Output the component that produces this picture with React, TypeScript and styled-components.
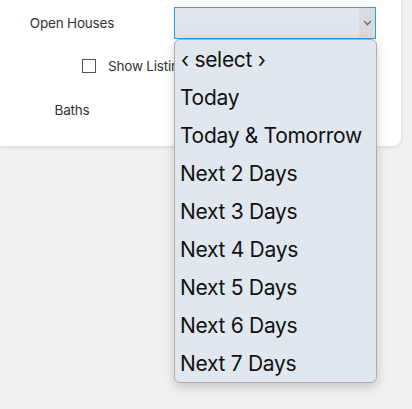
import styled, { createGlobalStyle } from "styled-components";

const GlobalStyle = createGlobalStyle`
  html, body {
    margin: 0;
    padding: 0;
    background: #f1f1f1;
    font-family: Inter, "Noto Sans", sans-serif;
  }
`;

const Page = styled.div`
  width: 412px;
  height: 409px;
  overflow: hidden;
`;

const Card = styled.div`
  width: 401px;
  height: 146px;
  background: #fff;
  border-bottom-right-radius: 8px;
  box-shadow: 0 1px 4px rgba(0, 0, 0, 0.12);
  display: grid;
  grid-template-columns: 144px 202px;
  column-gap: 30px;
  grid-template-rows: 32px 28px 34px;
  row-gap: 13px;
  padding-top: 7px;
  box-sizing: border-box;
`;

const Label = styled.div`
  font-size: 13.5px;
  color: #333;
  text-align: center;
  align-self: center;
  letter-spacing: -0.2px;
`;

const Field = styled.div`
  position: relative;
`;

const SelectBox = styled.div<{ $focused?: boolean }>`
  height: ${(p) => (p.$focused ? 32 : 34)}px;
  box-sizing: border-box;
  border: 1px solid ${(p) => (p.$focused ? "#2aa0dc" : "#777")};
  background: linear-gradient(#e3e8f0, #dde3ec);
  display: flex;
  justify-content: flex-end;
`;

const Arrow = styled.div`
  width: 16px;
  background: #d9dbdf;
  display: flex;
  align-items: center;
  justify-content: center;
`;

const CheckRow = styled.label`
  grid-column: 1 / span 2;
  display: flex;
  align-items: center;
  gap: 12px;
  padding-left: 82px;
  font-size: 13.5px;
  color: #333;
  letter-spacing: -0.2px;
`;

const Box = styled.span`
  width: 12px;
  height: 12px;
  border: 1px solid #555;
  background: #fff;
`;

const Dropdown = styled.ul`
  position: absolute;
  top: 32px;
  left: 0;
  width: 203px;
  margin: 0;
  padding: 0;
  list-style: none;
  box-sizing: border-box;
  background: #e1e7ef;
  border: 1px solid #acacac;
  border-radius: 6px;
  box-shadow: 0 4px 12px rgba(0, 0, 0, 0.18);
  z-index: 10;
`;

const Option = styled.li<{ $placeholder?: boolean }>`
  height: 38px;
  display: flex;
  align-items: center;
  padding-left: ${(p) => (p.$placeholder ? 6 : 5)}px;
  font-size: 21px;
  color: #111;
  letter-spacing: -0.3px;
  white-space: nowrap;
`;

const options = [
  "Today",
  "Today & Tomorrow",
  "Next 2 Days",
  "Next 3 Days",
  "Next 4 Days",
  "Next 5 Days",
  "Next 6 Days",
  "Next 7 Days",
];

function Chevron() {
  return (
    <svg width="9" height="6" viewBox="0 0 9 6">
      <path d="M1 1l3.5 3.5L8 1" fill="none" stroke="#666" strokeWidth="1.3" />
    </svg>
  );
}

export default function App() {
  return (
    <Page>
      <GlobalStyle />
      <Card>
        <Label>Open Houses</Label>
        <Field>
          <SelectBox $focused>
            <Arrow>
              <Chevron />
            </Arrow>
          </SelectBox>
          <Dropdown>
            <Option $placeholder>‹ select ›</Option>
            {options.map((o) => (
              <Option key={o}>{o}</Option>
            ))}
          </Dropdown>
        </Field>
        <CheckRow>
          <Box />
          Show Listings
        </CheckRow>
        <Label>Baths</Label>
        <Field>
          <SelectBox />
        </Field>
      </Card>
    </Page>
  );
}
